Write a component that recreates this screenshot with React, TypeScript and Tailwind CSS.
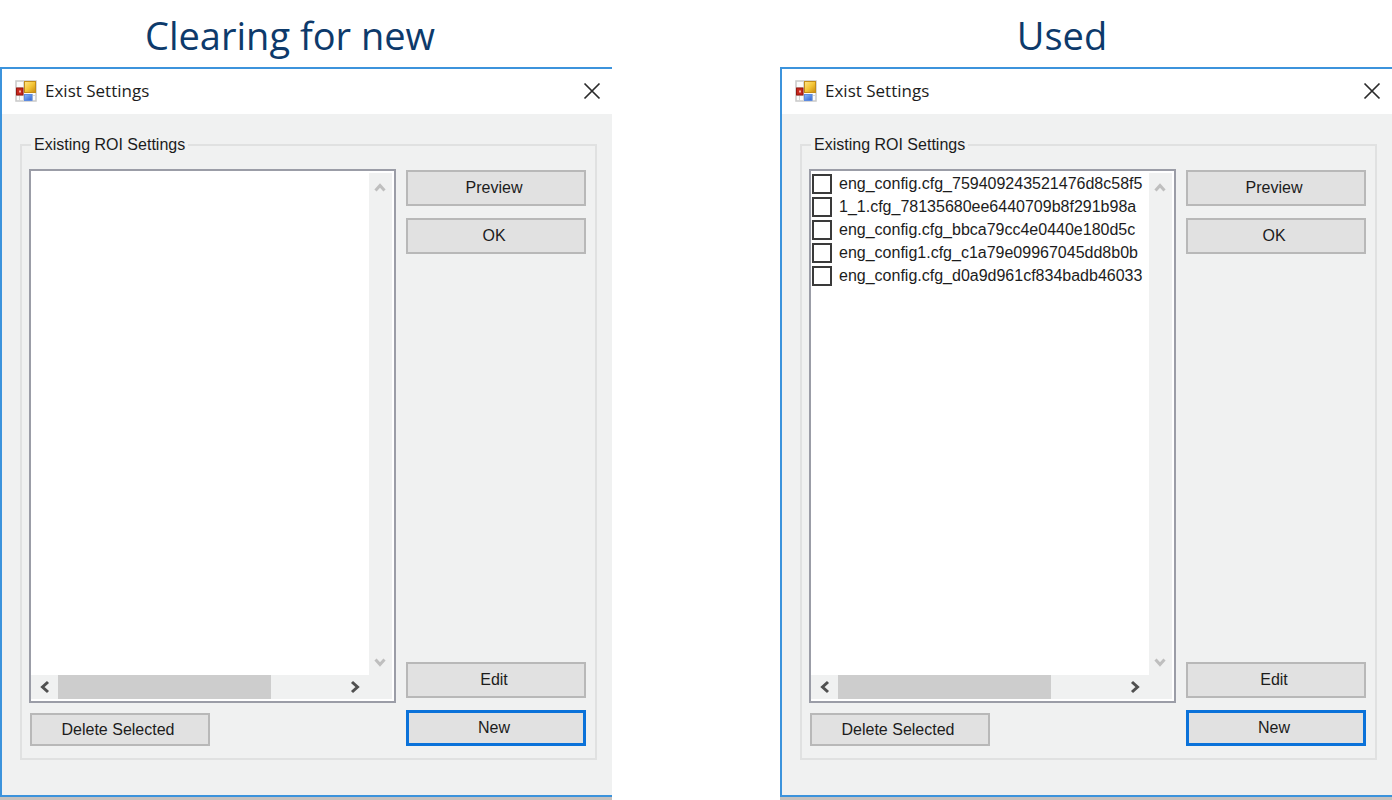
import React from "react";

function AppIcon() {
  return (
    <svg width="22" height="22" viewBox="0 0 22 22" aria-hidden="true">
      <defs>
        <linearGradient id="gold" x1="0" y1="0" x2="1" y2="1">
          <stop offset="0" stopColor="#ffe58a" />
          <stop offset="0.5" stopColor="#f4c637" />
          <stop offset="1" stopColor="#c98a10" />
        </linearGradient>
        <linearGradient id="blue" x1="0" y1="0" x2="1" y2="1">
          <stop offset="0" stopColor="#8bb9fb" />
          <stop offset="1" stopColor="#2f62d0" />
        </linearGradient>
      </defs>
      <rect x="1" y="1" width="20" height="20" fill="#fbfbfb" stroke="#c9c9c9" strokeWidth="1.5" />
      <path d="M8.5 1v20M1 7.5h8M1 15.5h20M4.5 15.5v5.5M17.5 14v7" stroke="#d5d5d5" fill="none" />
      <rect x="1.5" y="8" width="6.5" height="7" fill="#c4261d" stroke="#97160f" />
      <rect x="4" y="10.5" width="2" height="2" fill="#f7b0a8" />
      <rect x="9.5" y="1.5" width="11" height="11" fill="url(#gold)" stroke="#c48d17" />
      <rect x="9.5" y="14.5" width="7.5" height="6" fill="url(#blue)" stroke="#5d8be0" />
    </svg>
  );
}

const ARROWS = {
  up: "M1.5 9.5L6 4.5l4.5 5",
  down: "M1.5 4.5L6 9.5l4.5-5",
  left: "M10 2L4.5 7l5.5 5",
  right: "M3 2l5.5 5L3 12",
};

function Arrow({ dir, color }: { dir: keyof typeof ARROWS; color: string }) {
  return (
    <svg width="14" height="14" viewBox="0 0 14 14" aria-hidden="true">
      <path d={ARROWS[dir]} fill="none" stroke={color} strokeWidth="3" />
    </svg>
  );
}

function DialogButton({
  children,
  className = "h-9",
  focused = false,
}: {
  children: React.ReactNode;
  className?: string;
  focused?: boolean;
}) {
  return (
    <button
      type="button"
      className={`w-[180px] shrink-0 bg-[#e1e1e1] pr-1 text-base leading-5 ${className} ${
        focused ? "border-[3px] border-[#0b72d9]" : "border-2 border-[#b8b8b8]"
      }`}
    >
      {children}
    </button>
  );
}

function FileList({ files }: { files: string[] }) {
  return (
    <div className="flex min-h-0 flex-1 flex-col border-2 border-[#9b9da7] bg-[#f0f1f1]">
      <div className="flex min-h-0 flex-1">
        <ul className="min-w-0 flex-1 overflow-hidden bg-white pl-px pt-px">
          {files.map((file) => (
            <li key={file} className="h-[23px]">
              <label className="flex items-center gap-[7px] overflow-hidden whitespace-nowrap text-base leading-[23px]">
                <input
                  type="checkbox"
                  className="h-5 w-5 shrink-0 appearance-none border-2 border-[#3a3a3a] bg-white checked:bg-[#3a3a3a]"
                />
                {file}
              </label>
            </li>
          ))}
        </ul>
        <div className="flex w-[25px] flex-col items-center justify-between border-r-2 border-t-2 border-white pb-[6px] pt-2">
          <button type="button" aria-label="Scroll up">
            <Arrow dir="up" color="#bfbfbf" />
          </button>
          <button type="button" aria-label="Scroll down">
            <Arrow dir="down" color="#bfbfbf" />
          </button>
        </div>
      </div>
      <div className="flex h-[26px] border-b-2 border-r-2 border-white pr-[22px]">
        <button type="button" aria-label="Scroll left" className="flex w-[27px] items-center justify-center">
          <Arrow dir="left" color="#505050" />
        </button>
        <div className="flex flex-1">
          <div className="w-3/4 bg-[#cdcdcd]" />
        </div>
        <button type="button" aria-label="Scroll right" className="flex w-[28px] items-center justify-center">
          <Arrow dir="right" color="#505050" />
        </button>
      </div>
    </div>
  );
}

function SettingsDialog({ files }: { files: string[] }) {
  return (
    <section className="flex flex-1 flex-col border-b-[3px] border-[#c6c1be]">
      <div className="flex flex-1 flex-col border-y-2 border-l-2 border-[#3c93dc] bg-[#f0f1f1]">
        <header className="flex h-[45px] shrink-0 items-center bg-white pb-[2px] pl-[13px] pr-[11px]">
          <AppIcon />
          <h2 className="ml-2 flex-1 font-['Open_Sans',sans-serif] text-[17px] leading-6">Exist Settings</h2>
          <button type="button" aria-label="Close">
            <svg width="18" height="18" viewBox="0 0 18 18" aria-hidden="true">
              <path d="M1.5 1.5l15 15M16.5 1.5l-15 15" stroke="#2b2b2b" strokeWidth="1.7" fill="none" />
            </svg>
          </button>
        </header>
        <div className="flex flex-1 flex-col pb-[35px] pl-[18px] pr-[15px] pt-[19px]">
          <fieldset className="flex min-w-0 flex-1 flex-col border-2 border-[#e0e1e1] px-[7px] pb-3 pt-3">
            <legend className="ml-[2px] px-[3px] text-base leading-6">Existing ROI Settings</legend>
            <div className="flex min-h-0 flex-1 gap-[10px]">
              <div className="flex min-w-0 flex-1 flex-col gap-[10px]">
                <FileList files={files} />
                <DialogButton className="ml-px h-[33px]">Delete Selected</DialogButton>
              </div>
              <div className="flex flex-col gap-3 pr-[2px] pt-px">
                <DialogButton>Preview</DialogButton>
                <DialogButton>OK</DialogButton>
                <div className="flex-1" />
                <DialogButton>Edit</DialogButton>
                <DialogButton focused>New</DialogButton>
              </div>
            </div>
          </fieldset>
        </div>
      </div>
    </section>
  );
}

const USED_FILES = [
  "eng_config.cfg_759409243521476d8c58f5",
  "1_1.cfg_78135680ee6440709b8f291b98a",
  "eng_config.cfg_bbca79cc4e0440e180d5c",
  "eng_config1.cfg_c1a79e09967045dd8b0b",
  "eng_config.cfg_d0a9d961cf834badb46033",
];

export default function App() {
  const heading =
    "h-[67px] shrink-0 pt-2 text-center font-['Open_Sans',sans-serif] text-[38px] leading-[54px] text-[#0d3a6b]";
  return (
    <main className="flex min-h-screen gap-[168px] bg-white font-['Liberation_Sans',Arial,sans-serif] text-[#1c1c1c]">
      <div className="flex min-w-0 flex-1 flex-col">
        <h1 className={`${heading} pr-8`}>Clearing for new</h1>
        <SettingsDialog files={[]} />
      </div>
      <div className="flex min-w-0 flex-1 flex-col">
        <h1 className={`${heading} pr-12`}>Used</h1>
        <SettingsDialog files={USED_FILES} />
      </div>
    </main>
  );
}
